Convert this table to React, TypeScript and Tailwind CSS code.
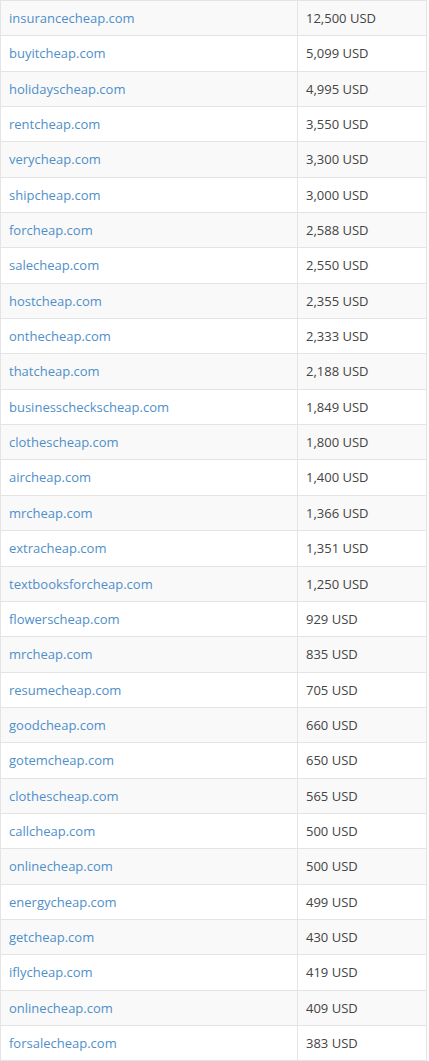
import React from 'react';

const rows: [string, string][] = [
  ['insurancecheap.com', '12,500 USD'],
  ['buyitcheap.com', '5,099 USD'],
  ['holidayscheap.com', '4,995 USD'],
  ['rentcheap.com', '3,550 USD'],
  ['verycheap.com', '3,300 USD'],
  ['shipcheap.com', '3,000 USD'],
  ['forcheap.com', '2,588 USD'],
  ['salecheap.com', '2,550 USD'],
  ['hostcheap.com', '2,355 USD'],
  ['onthecheap.com', '2,333 USD'],
  ['thatcheap.com', '2,188 USD'],
  ['businesscheckscheap.com', '1,849 USD'],
  ['clothescheap.com', '1,800 USD'],
  ['aircheap.com', '1,400 USD'],
  ['mrcheap.com', '1,366 USD'],
  ['extracheap.com', '1,351 USD'],
  ['textbooksforcheap.com', '1,250 USD'],
  ['flowerscheap.com', '929 USD'],
  ['mrcheap.com', '835 USD'],
  ['resumecheap.com', '705 USD'],
  ['goodcheap.com', '660 USD'],
  ['gotemcheap.com', '650 USD'],
  ['clothescheap.com', '565 USD'],
  ['callcheap.com', '500 USD'],
  ['onlinecheap.com', '500 USD'],
  ['energycheap.com', '499 USD'],
  ['getcheap.com', '430 USD'],
  ['iflycheap.com', '419 USD'],
  ['onlinecheap.com', '409 USD'],
  ['forsalecheap.com', '383 USD'],
];

const App: React.FC = () => {
  return (
    <div className="bg-white min-h-screen overflow-hidden" style={{ fontFamily: '"Open Sans", sans-serif' }}>
      <table className="w-[427px] border-collapse text-[13px] leading-[18.35px]">
        <tbody>
          {rows.map(([domain, price], i) => (
            <tr key={i} className={i % 2 === 0 ? 'bg-[#f9f9f9]' : 'bg-white'}>
              <td className="w-[297px] border border-[#e4e4e4] px-2 py-2 align-top">
                <a href="#" className="text-[#4f8fc9]">{domain}</a>
              </td>
              <td className="border border-[#e4e4e4] px-2 py-2 align-top text-[#444]">{price}</td>
            </tr>
          ))}
        </tbody>
      </table>
    </div>
  );
};

export default App;
